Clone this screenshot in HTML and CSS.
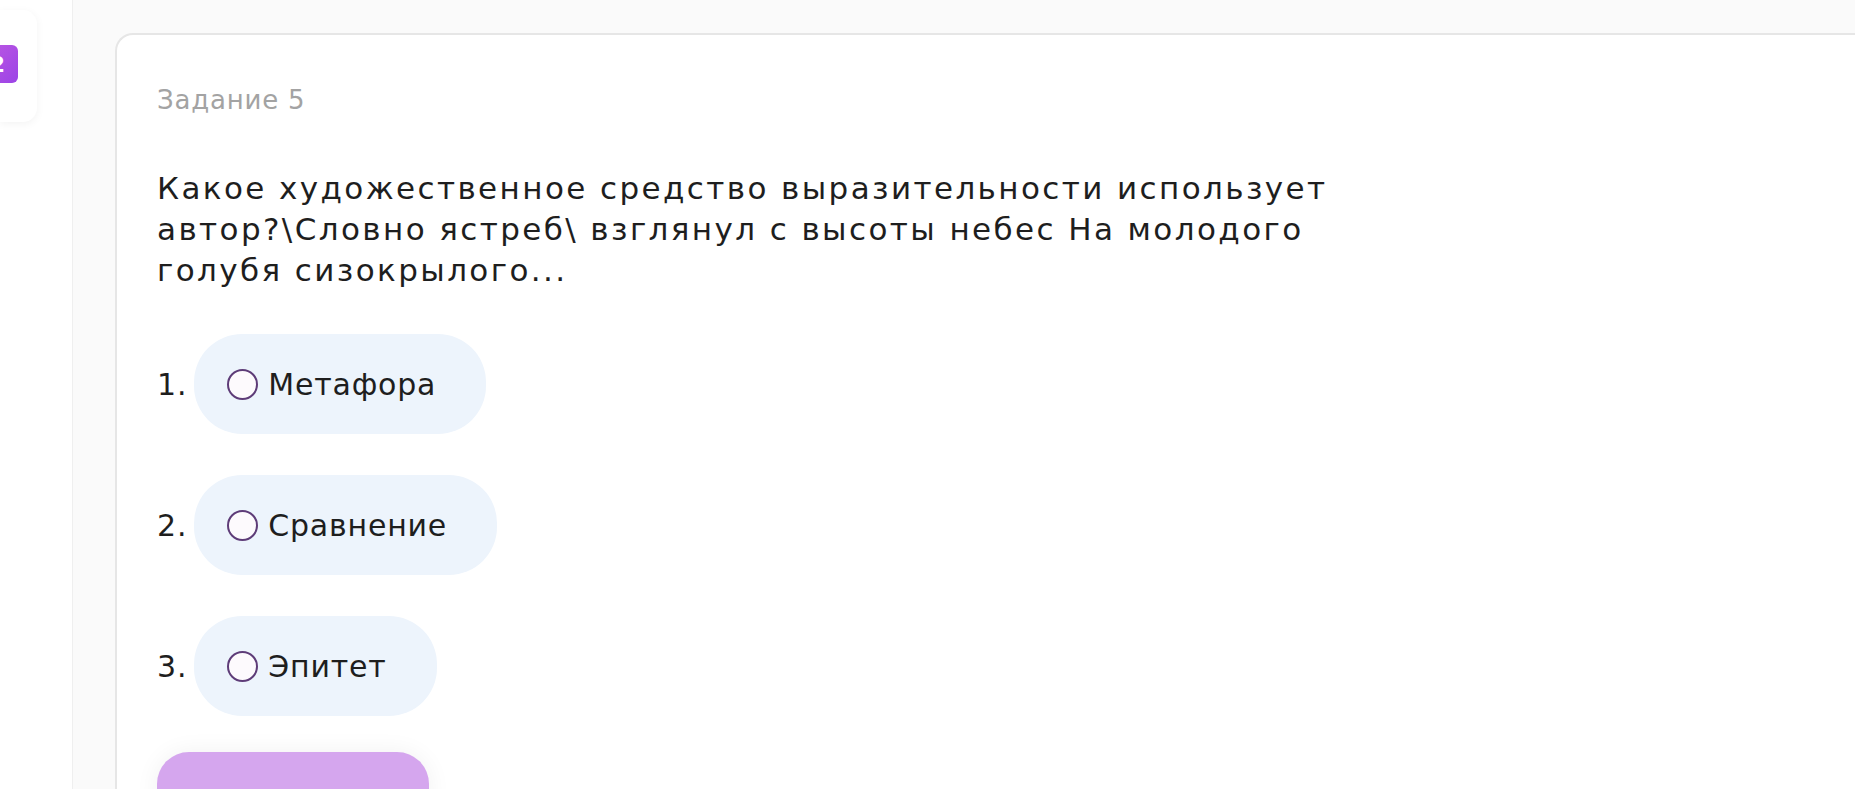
FILE: index.html
```html
<!DOCTYPE html>
<html lang="ru">
<head>
<meta charset="utf-8">
<title>Задание 5</title>
<link rel="stylesheet" href="styles.css">
</head>
<body>
<aside class="sidebar">
  <div class="side-card">
    <div class="badge"><span class="badge-num">2</span></div>
  </div>
</aside>
<main class="main">
  <section class="card">
    <div class="task-label">Задание 5</div>
    <p class="question">Какое художественное средство выразительности использует автор?&#8288;\&#8288;Словно ястреб\ взглянул с высоты небес На молодого голубя сизокрылого...</p>
    <ol class="options">
      <li class="option"><span class="num">1.</span><label class="pill"><span class="radio"></span><span class="opt-text">Метафора</span></label></li>
      <li class="option"><span class="num">2.</span><label class="pill"><span class="radio"></span><span class="opt-text">Сравнение</span></label></li>
      <li class="option"><span class="num">3.</span><label class="pill"><span class="radio"></span><span class="opt-text">Эпитет</span></label></li>
    </ol>
    <button class="submit" type="button" aria-label="Ответить"></button>
  </section>
</main>
</body>
</html>
```
FILE: styles.css
```css
* { box-sizing: border-box; }
html, body { margin: 0; padding: 0; height: 100%; overflow: hidden; }
body {
  display: flex;
  background: #fafafa;
  font-family: "DejaVu Sans", "Noto Sans", sans-serif;
  color: #1e1e1e;
}
.sidebar {
  width: 73px;
  flex: none;
  background: #ffffff;
  border-right: 1px solid #efefef;
  padding-top: 10px;
}
.side-card {
  width: 37px;
  height: 112px;
  background: #fff;
  border-radius: 0 14px 14px 0;
  box-shadow: 0 2px 8px rgba(0,0,0,0.05);
  padding-top: 35px;
}
.badge {
  width: 18px;
  height: 38px;
  background: linear-gradient(135deg, #b553e3, #9c44e6);
  border-radius: 0 6px 6px 0;
  display: flex;
  justify-content: flex-end;
  align-items: center;
  overflow: hidden;
}
.badge-num {
  color: #fff;
  font-weight: 700;
  font-size: 22px;
  margin-right: 13px;
}
.main {
  flex: 1;
  padding: 33px 0 0 42px;
  min-width: 0;
}
.card {
  background: #fff;
  border: 2px solid #e6e6e6;
  border-right: none;
  border-radius: 18px 0 0 0;
  height: 900px;
  padding: 50px 40px 0 40px;
}
.task-label {
  font-size: 26px;
  line-height: 30px;
  letter-spacing: 0.8px;
  color: #a3a3a3;
}
.question {
  margin: 53px 0 0 0;
  max-width: 1220px;
  font-size: 31px;
  line-height: 41px;
  letter-spacing: 2.4px;
  color: #1e1e1e;
}
.options {
  list-style: none;
  margin: 43px 0 0 0;
  padding: 0;
  display: flex;
  flex-direction: column;
  gap: 41px;
}
.option {
  display: flex;
  align-items: center;
  gap: 7px;
  font-size: 30px;
  letter-spacing: 0.8px;
}
.num { color: #1e1e1e; }
.pill {
  display: flex;
  align-items: center;
  gap: 10px;
  height: 100px;
  padding: 0 50px 0 33px;
  background: #edf4fc;
  border-radius: 48px;
}
.radio {
  width: 31px;
  height: 31px;
  border: 2px solid #5e3c78;
  border-radius: 50%;
  background: #fdfafd;
  flex: none;
}
.submit {
  display: block;
  margin-top: 36px;
  width: 272px;
  height: 80px;
  border: none;
  border-radius: 32px;
  background: #d5a6ee;
  box-shadow: 0 0 24px rgba(0,0,0,0.06);
}
```
